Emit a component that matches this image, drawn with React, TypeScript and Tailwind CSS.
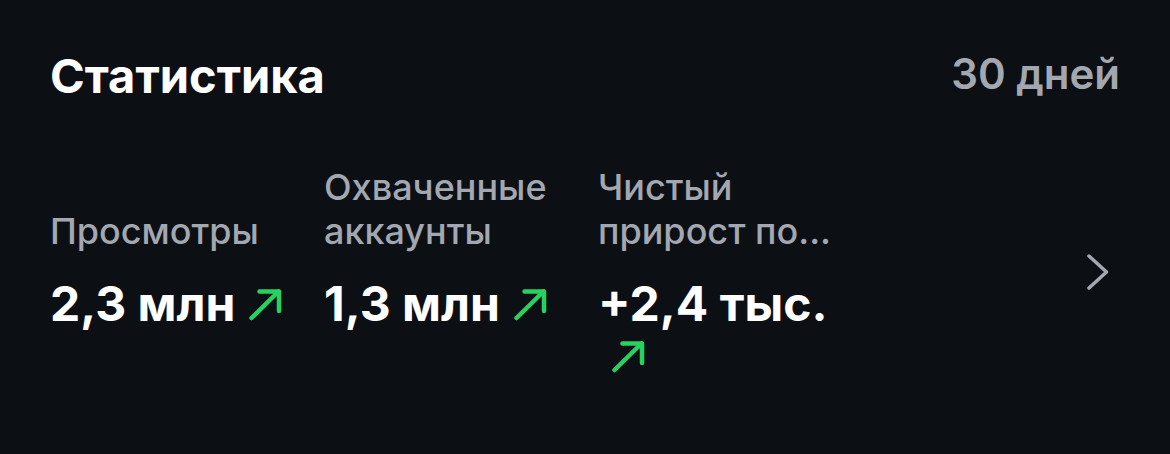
import React from "react";

function UpArrow() {
  return (
    <svg width="35" height="33" viewBox="0 0 35 33" fill="none" className="shrink-0 block">
      <path d="M3.5 30 L30.5 3.5" stroke="#27d160" strokeWidth="4.5" strokeLinecap="round" />
      <path d="M11.5 3.5 H31 V23" stroke="#27d160" strokeWidth="4.5" strokeLinecap="round" strokeLinejoin="round" />
    </svg>
  );
}

function Stat({
  label,
  value,
  wrapped = false,
}: {
  label: React.ReactNode;
  value: string;
  wrapped?: boolean;
}) {
  return (
    <div className="w-[250px] shrink-0 flex flex-col">
      <div className="h-[88px] flex flex-col justify-end text-[36px] leading-[44px] text-[#a2a7b0] font-medium">
        <div>{label}</div>
      </div>
      <div className="mt-[25px] flex flex-wrap items-center gap-x-[13px] gap-y-[10px]">
        <span className="text-[48px] leading-[52px] font-bold text-white">{value}</span>
        <span className={wrapped ? "pl-[13px]" : ""}>
          <UpArrow />
        </span>
      </div>
    </div>
  );
}

export default function App() {
  return (
    <div
      className="w-[1170px] h-[454px] bg-[#0c0f14] pl-[50px] pr-[50px] pt-[48px]"
      style={{ fontFamily: "Inter, 'Noto Sans', sans-serif" }}
    >
      <div className="flex items-center justify-between">
        <h1 className="text-[47px] leading-[56px] font-bold text-white">Статистика</h1>
        <span className="text-[42px] leading-[48px] font-semibold text-[#a2a7b0] -mt-[4px]">30 дней</span>
      </div>
      <div className="mt-[61px] flex items-start">
        <div className="flex gap-[24px]">
          <Stat label="Просмотры" value="2,3 млн" />
          <Stat label={<>Охваченные<br />аккаунты</>} value="1,3 млн" />
          <Stat label={<>Чистый<br />прирост по...</>} value="+2,4 тыс." wrapped />
        </div>
        <div className="ml-auto mr-[10px] self-center mt-[6px]">
          <svg width="24" height="38" viewBox="0 0 24 38" fill="none" className="block">
            <path d="M3 3 L20.5 19 L3 35" stroke="#a2a7b0" strokeWidth="3.5" strokeLinecap="round" strokeLinejoin="round" />
          </svg>
        </div>
      </div>
    </div>
  );
}
